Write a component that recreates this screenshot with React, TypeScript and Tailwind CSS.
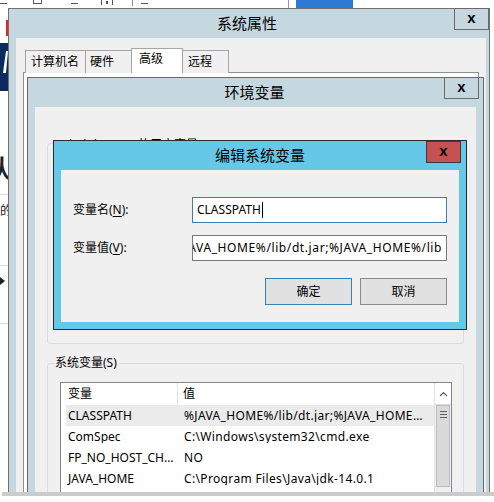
import React from "react";

function CloseBtn({ red = false, className = "" }: { red?: boolean; className?: string }) {
  return (
    <div
      className={
        "absolute w-[35px] h-[22px] flex items-center justify-center border " +
        (red ? "bg-[#c75050] border-[#3a3a3a] " : "bg-[#c5d8df] border-[#6a6a6a] ") +
        className
      }
    >
      <span className="font-['Liberation_Sans',sans-serif] font-bold text-[15px] leading-none text-black -mt-[3px]">x</span>
    </div>
  );
}

const rows = [
  { name: "CLASSPATH", value: "%JAVA_HOME%/lib/dt.jar;%JAVA_HOME%/lib/tools.jar", sel: true },
  { name: "ComSpec", value: "C:\\Windows\\system32\\cmd.exe" },
  { name: "FP_NO_HOST_CHECK", value: "NO" },
  { name: "JAVA_HOME", value: "C:\\Program Files\\Java\\jdk-14.0.1" },
];

export default function App() {
  return (
    <div className="relative w-[494px] h-[502px] overflow-hidden bg-white font-['Noto_Sans','Noto_Sans_CJK_SC',sans-serif] text-[12px] leading-none text-black">
      {/* desktop fragments behind */}
      <div className="absolute left-0 top-[3px] w-[7px] h-px bg-[#555]" />
      <div className="absolute left-[33px] top-0 w-[9px] h-[4px] border-b border-l border-r border-[#555]" />
      <div className="absolute left-[71px] top-[3px] w-[7px] h-px bg-[#555]" />
      <div className="absolute left-[101px] top-0 w-[12px] h-[5px] border-l border-r border-[#555]" />
      <div className="absolute left-[106px] top-[1px] w-[2px] h-[3px] bg-[#555]" />
      <div className="absolute left-[132px] top-0 w-px h-[6px] bg-[#888]" />
      <div className="absolute left-[141px] top-[3px] w-[7px] h-px bg-[#555]" />
      <div className="absolute left-[288px] top-0 w-px h-[8px] bg-[#9a9a9a]" />
      <div className="absolute left-[296px] top-0 w-[57px] h-[8px] bg-[#2b7bd3]" />

      <div className="absolute left-[6px] top-[20px] w-[2px] h-[16px] bg-[#e0262b]" />
      <div className="absolute left-0 top-[43px] w-[8px] h-[48px] bg-[#0b2b5e]">
        <svg width="8" height="48" className="block">
          <polygon points="6,8 8,8 6,30 3,30" fill="#ffffff" />
        </svg>
      </div>
      <span className="absolute left-[-14px] top-[156px] text-[24px] font-bold text-[#222]">认</span>
      <div className="absolute left-0 top-[194px] w-[8px] h-px bg-[#dcdcdc]" />
      <span className="absolute left-0 top-[205px] text-[12px] text-[#222]">的</span>
      <div className="absolute left-0 top-[265px] w-[8px] h-px bg-[#dcdcdc]" />
      <svg className="absolute left-0 top-[276px]" width="6" height="10">
        <polygon points="0,1 5,5 0,9" fill="#222" />
      </svg>
      <div className="absolute left-0 top-[323px] w-[8px] h-px bg-[#dcdcdc]" />

      {/* 系统属性 window */}
      <div className="absolute left-[8px] top-[8px] w-[482px] h-[486px] border border-[#707070] bg-[#c5d8df] flex flex-col">
        <div className="h-[29px] shrink-0 flex items-center justify-center text-[15px] pr-[4px]">系统属性</div>
        <CloseBtn className="left-[445px] top-[-1px]" />
        <div className="flex-1 ml-[7px] mr-[3px] bg-[#f0f0f0] flex flex-col pt-[10px]">
          <div className="flex items-end h-[25px] ml-[9px] relative z-10">
            <div className="w-[61px] h-[23px] border border-b-0 border-[#a5a5a5] bg-[#f0f0f0] flex items-center pl-[5px]">计算机名</div>
            <div className="w-[47px] h-[23px] -ml-px border border-b-0 border-[#a5a5a5] bg-[#f0f0f0] flex items-center pl-[4px]">硬件</div>
            <div className="w-[52px] h-[25px] -ml-px border border-b-0 border-[#a5a5a5] bg-white flex items-center pl-[7px] pb-[4px]">高级</div>
            <div className="w-[47px] h-[23px] -ml-px border border-b-0 border-[#a5a5a5] bg-[#f0f0f0] flex items-center pl-[5px]">远程</div>
          </div>
          <div className="ml-[7px] w-[456px] flex-1 -mt-px border border-[#8e8f8f] bg-white" />
        </div>
      </div>

      {/* 环境变量 window */}
      <div className="absolute left-[27px] top-[77px] w-[457px] h-[430px] border border-[#6a6a6a] bg-[#c5d8df] flex flex-col">
        <div className="h-[29px] shrink-0 flex items-center justify-center text-[15px] pr-[2px]">环境变量</div>
        <CloseBtn className="left-[416px] top-[-1px]" />
        <div className="flex-1 mx-[7px] bg-[#f0f0f0] flex flex-col">
          <div className="relative ml-[12px] mt-[36px] w-[417px] h-[201px] shrink-0 border border-[#d8dde2] rounded-[3px]">
            <span className="absolute left-[9px] top-[-5px] bg-[#f0f0f0] pr-[2px] whitespace-nowrap">Administrator 的用户变量(U)</span>
          </div>
          <div className="relative ml-[12px] mt-[19px] w-[417px] flex-1 border border-[#d8dde2] rounded-[3px] flex flex-col">
            <span className="absolute left-[7px] top-[-7px] bg-[#f0f0f0] pr-[2px] whitespace-nowrap">系统变量(S)</span>
            <div className="relative ml-[12px] mt-[18px] w-[392px] h-[110px] border border-b-0 border-[#828790] bg-white overflow-hidden">
              <div className="flex h-[22px] items-center">
                <div className="w-[117px] h-full flex items-center pl-[7px] border-r border-[#e5e5e5]">变量</div>
                <div className="flex-1 pl-[5px]">值</div>
              </div>
              {rows.map((r) => (
                <div
                  key={r.name}
                  className={"flex h-[21px] items-center ml-[5px] mr-[17px] " + (r.sel ? "bg-[#ebebeb]" : "")}
                >
                  <div className="w-[112px] pl-[2px] pr-[2px] whitespace-nowrap overflow-hidden text-ellipsis">{r.name}</div>
                  <div className="flex-1 min-w-0 pl-[6px] pr-[6px] whitespace-nowrap overflow-hidden text-ellipsis tracking-[0.35px]">{r.value}</div>
                </div>
              ))}
              <div className="absolute right-0 top-0 bottom-0 w-[17px] bg-[#f0f0f0] border-l border-[#e3e3e3] flex flex-col">
                <div className="h-[22px] flex items-center justify-center bg-white border-b border-[#dcdcdc]">
                  <svg width="9" height="6" viewBox="0 0 9 6">
                    <polyline points="1,5 4.5,1.5 8,5" fill="none" stroke="#606060" strokeWidth="1.2" />
                  </svg>
                </div>
                <div className="h-[82px] mx-[1px] bg-[#dadada] border border-[#bdbdbd] flex flex-col items-center pt-[5px] gap-[2px]">
                  <div className="w-[7px] h-px bg-[#606060]" />
                  <div className="w-[7px] h-px bg-[#606060]" />
                  <div className="w-[7px] h-px bg-[#606060]" />
                </div>
              </div>
            </div>
          </div>
        </div>
      </div>

      {/* 编辑系统变量 dialog */}
      <div className="absolute left-[53px] top-[140px] w-[414px] h-[190px] border border-[#2b2b2b] bg-[#65c8e8] flex flex-col">
        <div className="h-[29px] shrink-0 flex items-center justify-center text-[15px]">编辑系统变量</div>
        <CloseBtn red className="left-[372px] top-0" />
        <div className="flex-1 mx-[7px] mb-[7px] bg-[#f0f0f0] flex flex-col">
          <div className="flex items-center mt-[27px] h-[26px]">
            <div className="w-[131px] pl-[12px]">
              变量名(<span className="underline underline-offset-2">N</span>):
            </div>
            <div className="w-[255px] h-[26px] border border-[#3c7fb1] bg-white flex items-center pl-[4px]">
              <span className="whitespace-nowrap">CLASSPATH</span>
              <span className="inline-block w-px h-[16px] bg-black ml-[1px]" />
            </div>
          </div>
          <div className="flex items-center mt-[12px] h-[26px]">
            <div className="w-[131px] pl-[12px]">
              变量值(<span className="underline underline-offset-2">V</span>):
            </div>
            <div className="w-[255px] h-[26px] border border-[#7a7a7a] bg-white flex items-center justify-end overflow-hidden pr-[4px]">
              <span className="whitespace-nowrap shrink-0 tracking-[0.6px]">%JAVA_HOME%/lib/dt.jar;%JAVA_HOME%/lib</span>
            </div>
          </div>
          <div className="flex justify-end gap-[8px] pr-[12px] mt-[17px]">
            <div className="w-[87px] h-[27px] border border-[#3c7fb1] bg-[#e1e1e1] flex items-center justify-center">确定</div>
            <div className="w-[87px] h-[27px] border border-[#8a8a8a] bg-[#e1e1e1] flex items-center justify-center">取消</div>
          </div>
        </div>
      </div>

      {/* bottom band */}
      <div className="absolute left-0 top-[492px] w-[494px] h-[10px] bg-white">
        <div className="ml-[2px] h-[4px] bg-[#cbcbcb]" />
      </div>
    </div>
  );
}
